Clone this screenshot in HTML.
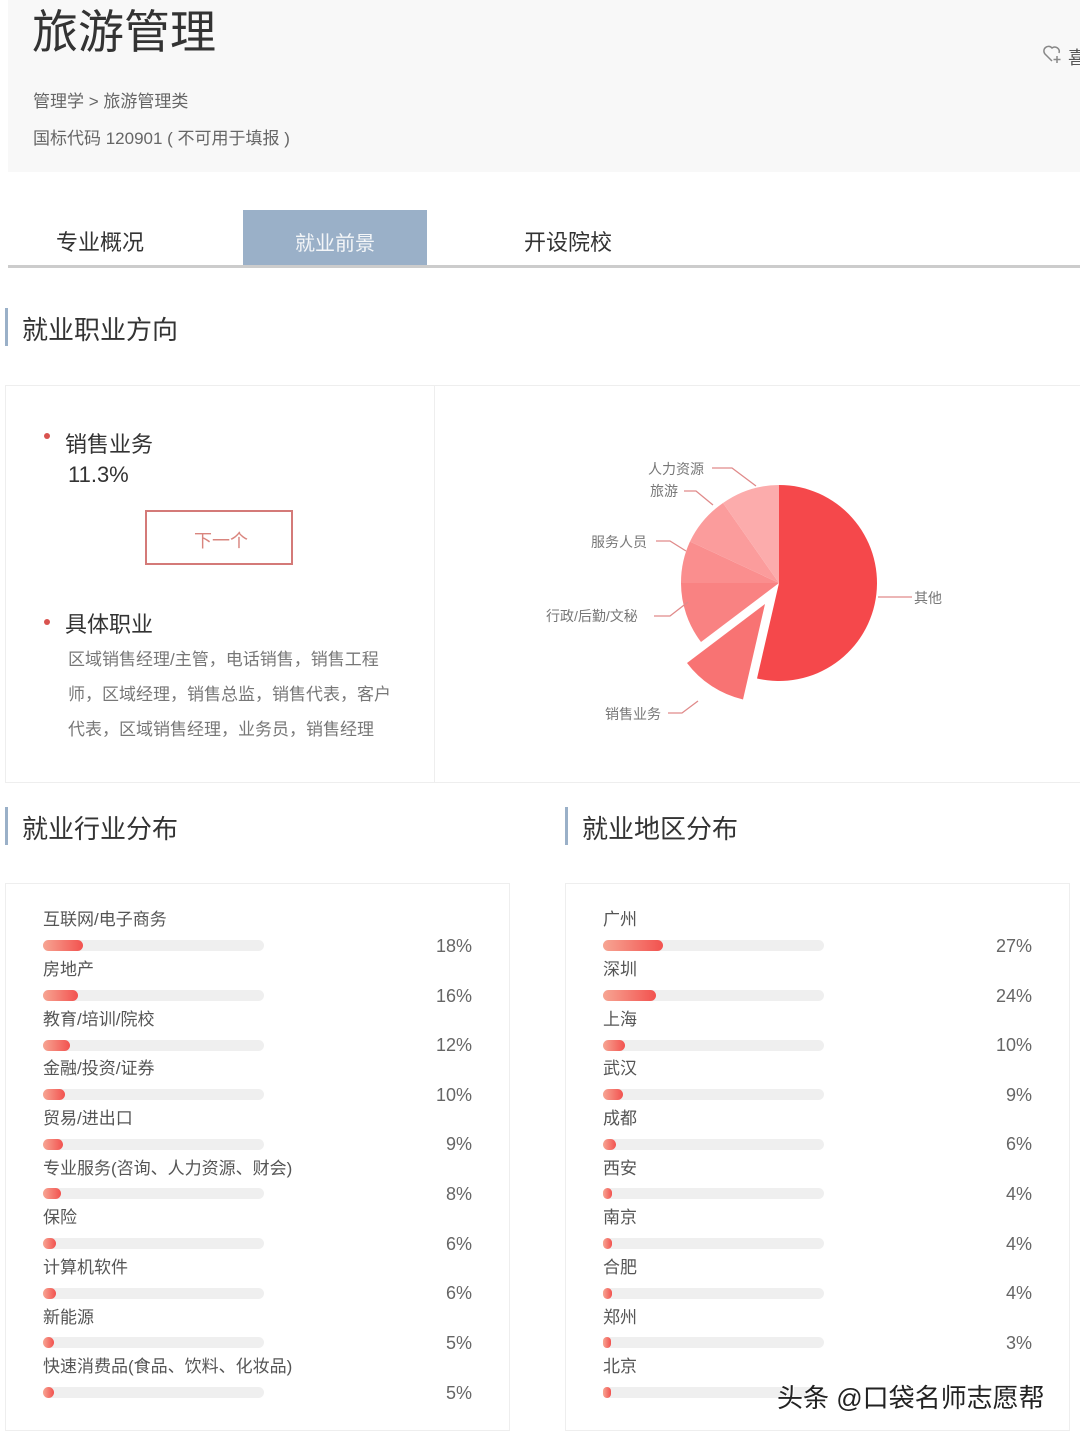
<!DOCTYPE html>
<html><head><meta charset="utf-8"><style>
*{margin:0;padding:0;box-sizing:border-box}
body{width:1080px;height:1435px;background:#fff;position:relative;overflow:hidden;font-family:"Liberation Sans","Noto Sans CJK SC",sans-serif;color:#333}
.a{position:absolute;white-space:nowrap}
.bar{position:absolute;height:11px;width:221px;background:#efefef;border-radius:6px}
.bar i{position:absolute;left:0;top:0;height:11px;border-radius:6px;background:linear-gradient(90deg,#f7a593,#f2524f)}
.lb{position:absolute;font-size:17px;color:#555;line-height:20px}
.pc{position:absolute;font-size:18px;color:#666;line-height:20px;text-align:right;width:60px}
</style></head><body>
<div class="a" style="left:8px;top:0;width:1072px;height:172px;background:#f8f8f8"></div>
<div class="a" style="left:32px;top:4px;font-size:46px;color:#333;line-height:56px">旅游管理</div>
<div class="a" style="left:33px;top:87px;font-size:17px;color:#666">管理学 &gt; 旅游管理类</div>
<div class="a" style="left:33px;top:124px;font-size:17px;color:#666">国标代码 120901 ( 不可用于填报 )</div>
<svg class="a" style="left:1042px;top:44px" width="22" height="22" viewBox="0 0 22 22"><path d="M10 17 L3 10 A4.5 4.5 0 0 1 10 4 A4.5 4.5 0 0 1 17 9" fill="none" stroke="#888" stroke-width="1.5"/><path d="M15 12v7M11.5 15.5h7" stroke="#888" stroke-width="1.5"/></svg>
<div class="a" style="left:1068px;top:44px;font-size:18px;color:#555">喜</div>

<div class="a" style="left:243px;top:210px;width:184px;height:56px;background:#9ab0c8"></div>
<div class="a" style="left:56px;top:225px;font-size:22px;color:#333">专业概况</div>
<div class="a" style="left:295px;top:227px;font-size:20px;color:#f4f6f8">就业前景</div>
<div class="a" style="left:524px;top:225px;font-size:22px;color:#333">开设院校</div>
<div class="a" style="left:8px;top:265px;width:1072px;height:3px;background:#ccc"></div>

<div class="a" style="left:5px;top:308px;width:3px;height:38px;background:#9ab0c8"></div>
<div class="a" style="left:22px;top:310px;font-size:26px;color:#333">就业职业方向</div>

<div class="a" style="left:5px;top:385px;width:1080px;height:398px;border:1px solid #eee"></div>
<div class="a" style="left:434px;top:385px;width:1px;height:398px;background:#eee"></div>
<div class="a" style="left:44px;top:433px;width:6px;height:6px;border-radius:3px;background:#d9534f"></div>
<div class="a" style="left:65px;top:427px;font-size:22px;color:#333">销售业务</div>
<div class="a" style="left:68px;top:462px;font-size:22px;color:#333">11.3%</div>
<div class="a" style="left:145px;top:510px;width:148px;height:55px;border:2px solid #d47a78"></div>
<div class="a" style="left:194px;top:527px;font-size:18px;color:#d9857e">下一个</div>
<div class="a" style="left:44px;top:619px;width:6px;height:6px;border-radius:3px;background:#d9534f"></div>
<div class="a" style="left:65px;top:607px;font-size:22px;color:#333">具体职业</div>
<div class="a" style="left:68px;top:642px;font-size:17px;color:#777;line-height:35px;white-space:normal;width:330px">区域销售经理/主管，电话销售，销售工程师，区域经理，销售总监，销售代表，客户代表，区域销售经理，业务员，销售经理</div>

<svg class="a" style="left:0;top:0" width="1080" height="800">
<path d="M779 583 L779 485 A98 98 0 1 1 757 678.5 Z" fill="#f5484b"/>
<path d="M765 604 L743 699.5 A98 98 0 0 1 687 663 Z" fill="#f87373"/>
<path d="M779 583 L701 642 A98 98 0 0 1 681 583 Z" fill="#f98282"/>
<path d="M779 583 L681 583 A98 98 0 0 1 690 541.5 Z" fill="#fa8e8e"/>
<path d="M779 583 L690 541.5 A98 98 0 0 1 723 503 Z" fill="#fb9c9c"/>
<path d="M779 583 L723 503 A98 98 0 0 1 779 485 Z" fill="#fcacac"/>
<g fill="none" stroke="#e08a8a" stroke-width="1.3">
<path d="M712 468h20l24 18"/><path d="M684 491h12l17 14"/><path d="M656 541h14l16 10"/><path d="M654 616h16l18-14"/><path d="M668 713h14l16-12"/><path d="M878 597h34"/>
</g>
<g font-size="14" fill="#777" font-family="Liberation Sans,Noto Sans CJK SC,sans-serif">
<text x="648" y="474">人力资源</text><text x="650" y="496">旅游</text><text x="591" y="547">服务人员</text><text x="546" y="621">行政/后勤/文秘</text><text x="605" y="719">销售业务</text><text x="914" y="603">其他</text>
</g></svg>

<div class="a" style="left:5px;top:807px;width:3px;height:38px;background:#9ab0c8"></div>
<div class="a" style="left:22px;top:809px;font-size:26px;color:#333">就业行业分布</div>
<div class="a" style="left:565px;top:807px;width:3px;height:38px;background:#9ab0c8"></div>
<div class="a" style="left:582px;top:809px;font-size:26px;color:#333">就业地区分布</div>

<div class="a" style="left:5px;top:883px;width:505px;height:548px;border:1px solid #eee"></div>
<div class="a" style="left:565px;top:883px;width:505px;height:548px;border:1px solid #eee"></div>

<div class="lb" style="left:43px;top:910px">互联网/电子商务</div><div class="bar" style="left:43px;top:940px"><i style="width:40px"></i></div><div class="pc" style="left:412px;top:936px">18%</div>
<div class="lb" style="left:43px;top:960px">房地产</div><div class="bar" style="left:43px;top:990px"><i style="width:35px"></i></div><div class="pc" style="left:412px;top:986px">16%</div>
<div class="lb" style="left:43px;top:1010px">教育/培训/院校</div><div class="bar" style="left:43px;top:1040px"><i style="width:27px"></i></div><div class="pc" style="left:412px;top:1035px">12%</div>
<div class="lb" style="left:43px;top:1059px">金融/投资/证券</div><div class="bar" style="left:43px;top:1089px"><i style="width:22px"></i></div><div class="pc" style="left:412px;top:1085px">10%</div>
<div class="lb" style="left:43px;top:1109px">贸易/进出口</div><div class="bar" style="left:43px;top:1139px"><i style="width:20px"></i></div><div class="pc" style="left:412px;top:1134px">9%</div>
<div class="lb" style="left:43px;top:1159px">专业服务(咨询、人力资源、财会)</div><div class="bar" style="left:43px;top:1188px"><i style="width:18px"></i></div><div class="pc" style="left:412px;top:1184px">8%</div>
<div class="lb" style="left:43px;top:1208px">保险</div><div class="bar" style="left:43px;top:1238px"><i style="width:13px"></i></div><div class="pc" style="left:412px;top:1234px">6%</div>
<div class="lb" style="left:43px;top:1258px">计算机软件</div><div class="bar" style="left:43px;top:1288px"><i style="width:13px"></i></div><div class="pc" style="left:412px;top:1283px">6%</div>
<div class="lb" style="left:43px;top:1308px">新能源</div><div class="bar" style="left:43px;top:1337px"><i style="width:11px"></i></div><div class="pc" style="left:412px;top:1333px">5%</div>
<div class="lb" style="left:43px;top:1357px">快速消费品(食品、饮料、化妆品)</div><div class="bar" style="left:43px;top:1387px"><i style="width:11px"></i></div><div class="pc" style="left:412px;top:1383px">5%</div>

<div class="lb" style="left:603px;top:910px">广州</div><div class="bar" style="left:603px;top:940px"><i style="width:60px"></i></div><div class="pc" style="left:972px;top:936px">27%</div>
<div class="lb" style="left:603px;top:960px">深圳</div><div class="bar" style="left:603px;top:990px"><i style="width:53px"></i></div><div class="pc" style="left:972px;top:986px">24%</div>
<div class="lb" style="left:603px;top:1010px">上海</div><div class="bar" style="left:603px;top:1040px"><i style="width:22px"></i></div><div class="pc" style="left:972px;top:1035px">10%</div>
<div class="lb" style="left:603px;top:1059px">武汉</div><div class="bar" style="left:603px;top:1089px"><i style="width:20px"></i></div><div class="pc" style="left:972px;top:1085px">9%</div>
<div class="lb" style="left:603px;top:1109px">成都</div><div class="bar" style="left:603px;top:1139px"><i style="width:13px"></i></div><div class="pc" style="left:972px;top:1134px">6%</div>
<div class="lb" style="left:603px;top:1159px">西安</div><div class="bar" style="left:603px;top:1188px"><i style="width:9px"></i></div><div class="pc" style="left:972px;top:1184px">4%</div>
<div class="lb" style="left:603px;top:1208px">南京</div><div class="bar" style="left:603px;top:1238px"><i style="width:9px"></i></div><div class="pc" style="left:972px;top:1234px">4%</div>
<div class="lb" style="left:603px;top:1258px">合肥</div><div class="bar" style="left:603px;top:1288px"><i style="width:9px"></i></div><div class="pc" style="left:972px;top:1283px">4%</div>
<div class="lb" style="left:603px;top:1308px">郑州</div><div class="bar" style="left:603px;top:1337px"><i style="width:8px"></i></div><div class="pc" style="left:972px;top:1333px">3%</div>
<div class="lb" style="left:603px;top:1357px">北京</div><div class="bar" style="left:603px;top:1387px"><i style="width:8px"></i></div>

<div class="a" style="left:777px;top:1378px;font-size:26px;color:#222;text-shadow:0 0 2px #fff,1px 1px 0 #fff">头条 @口袋名师志愿帮</div>
</body></html>
